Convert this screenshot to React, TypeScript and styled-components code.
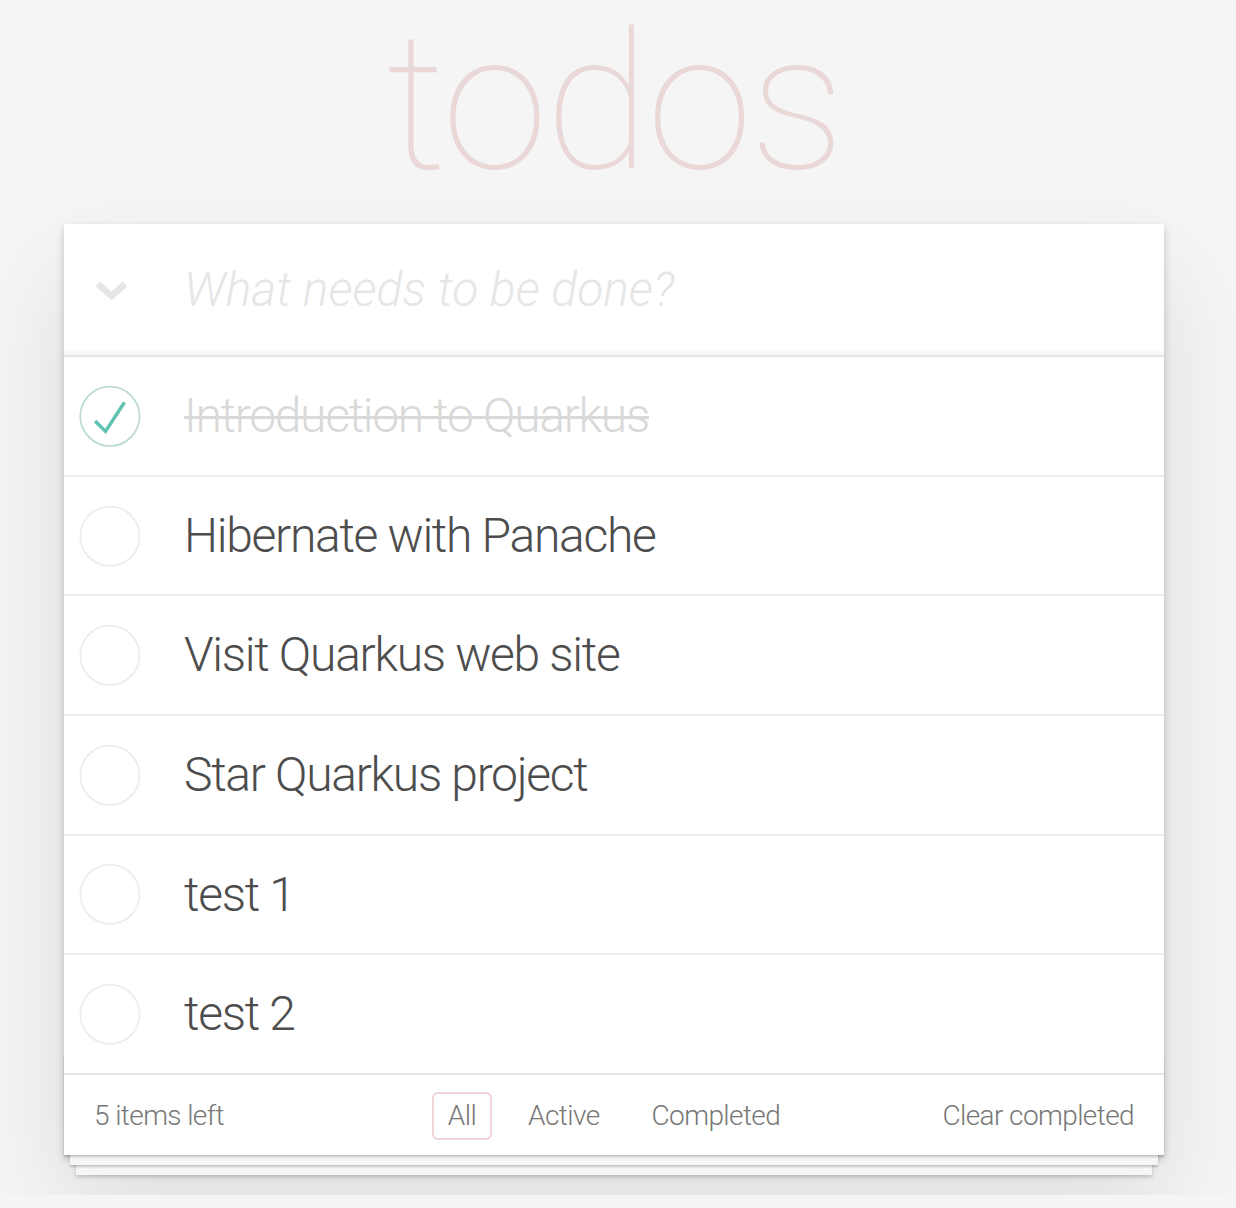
import React from "react";
import styled, { createGlobalStyle } from "styled-components";

const GlobalStyle = createGlobalStyle`
  html, body { margin: 0; padding: 0; }
  body {
    background: #f5f5f5;
    font-family: "Roboto", "Liberation Sans", Arial, sans-serif;
    font-weight: 300;
    color: #4d4d4d;
    -webkit-font-smoothing: antialiased;
  }
`;

const Page = styled.div`
  width: 1100px;
  margin: 0 0 40px 64px;
`;

const Title = styled.h1`
  margin: 0 0 18px;
  font-size: 192px;
  line-height: 206px;
  font-weight: 100;
  letter-spacing: -3px;
  text-align: center;
  color: rgba(175, 47, 47, 0.15);
  text-rendering: optimizeLegibility;
`;

const TodoApp = styled.section`
  position: relative;
  background: #fff;
  box-shadow: 0 4px 8px 0 rgba(0, 0, 0, 0.2), 0 50px 100px 0 rgba(0, 0, 0, 0.1);
`;

const Header = styled.header`
  display: flex;
  align-items: center;
  box-shadow: inset 0 -4px 2px rgba(0, 0, 0, 0.03);
`;

const ToggleAll = styled.label`
  display: flex;
  align-items: center;
  width: 120px;
  flex: none;
  padding: 2px 0 0 31px;
  box-sizing: border-box;
`;

const NewTodo = styled.input`
  flex: 1;
  min-width: 0;
  border: none;
  outline: none;
  background: transparent;
  padding: 32px 32px 32px 0;
  font-family: inherit;
  font-size: 48px;
  font-weight: 300;
  line-height: 1.4;
  letter-spacing: -1.2px;
  color: #4d4d4d;
  &::placeholder {
    font-style: italic;
    font-weight: 300;
    letter-spacing: 0;
    color: #e6e6e6;
  }
`;

const List = styled.ul`
  margin: 0;
  padding: 0;
  list-style: none;
  border-top: 2px solid #e6e6e6;
`;

const Item = styled.li`
  display: flex;
  align-items: center;
  border-bottom: 2px solid #ededed;
  &:last-child { border-bottom: none; }
`;

const Check = styled.svg`
  flex: none;
  width: 80px;
  height: 80px;
`;

const Label = styled.label<{ $done: boolean }>`
  flex: 1;
  margin-left: 40px;
  padding: 30px 30px 30px 0;
  font-size: 48px;
  line-height: 1.2;
  letter-spacing: -1.3px;
  white-space: pre;
  color: ${(p) => (p.$done ? "#d9d9d9" : "#4d4d4d")};
  text-decoration: ${(p) => (p.$done ? "line-through" : "none")};
  text-decoration-thickness: 3px;
`;

const Footer = styled.footer`
  position: relative;
  display: grid;
  grid-template-columns: 1fr auto 1fr;
  align-items: center;
  height: 40px;
  padding: 17px 30px 23px;
  border-top: 2px solid #e6e6e6;
  font-size: 28px;
  letter-spacing: -0.6px;
  color: #777;
  &::before {
    content: "";
    position: absolute;
    left: 0;
    right: 0;
    bottom: 0;
    height: 100px;
    overflow: hidden;
    pointer-events: none;
    box-shadow: 0 2px 2px rgba(0, 0, 0, 0.2), 0 16px 0 -6px #f6f6f6,
      0 18px 2px -6px rgba(0, 0, 0, 0.2), 0 32px 0 -12px #f6f6f6,
      0 34px 4px -12px rgba(0, 0, 0, 0.2);
  }
`;

const Count = styled.span`
  justify-self: start;
  line-height: 40px;
`;

const Filters = styled.ul`
  display: flex;
  gap: 8px;
  margin: 0;
  padding: 0;
  list-style: none;
`;

const Filter = styled.a<{ $selected?: boolean }>`
  display: block;
  margin: 0 6px;
  padding: 6px 14px;
  line-height: 32px;
  border: 2px solid ${(p) => (p.$selected ? "rgba(175, 47, 47, 0.2)" : "transparent")};
  border-radius: 6px;
  color: inherit;
  text-decoration: none;
  cursor: pointer;
`;

const Clear = styled.button`
  justify-self: end;
  margin: 0;
  padding: 0;
  border: none;
  background: none;
  font: inherit;
  letter-spacing: inherit;
  line-height: 40px;
  color: inherit;
  cursor: pointer;
`;

const Chevron = () => (
  <svg width="33" height="22" viewBox="0 0 33 22">
    <polyline points="3,4 16.5,16 30,4" fill="none" stroke="#e6e6e6" strokeWidth="6.5" />
  </svg>
);

const Toggle = ({ done }: { done: boolean }) => (
  <Check viewBox="-10 -18 100 135">
    <circle cx="50" cy="50" r="50" fill="none" stroke={done ? "#bddad5" : "#ededed"} strokeWidth="3" />
    {done && <path fill="#5dc2af" d="M72 25L42 71 27 56l-4 4 20 20 34-52z" />}
  </Check>
);

const todos = [
  { title: "Introduction to Quarkus", done: true },
  { title: "Hibernate with Panache", done: false },
  { title: "Visit Quarkus web site", done: false },
  { title: "Star Quarkus project", done: false },
  { title: "test 1", done: false },
  { title: "test 2", done: false },
];

export default function App() {
  return (
    <>
      <GlobalStyle />
      <Page>
        <Title>todos</Title>
        <TodoApp>
          <Header>
            <ToggleAll>
              <Chevron />
            </ToggleAll>
            <NewTodo placeholder="What needs to be done?" />
          </Header>
          <List>
            {todos.map((t) => (
              <Item key={t.title}>
                <Toggle done={t.done} />
                <Label $done={t.done}>{t.title}</Label>
              </Item>
            ))}
          </List>
          <Footer>
            <Count>5 items left</Count>
            <Filters>
              <li><Filter $selected>All</Filter></li>
              <li><Filter>Active</Filter></li>
              <li><Filter>Completed</Filter></li>
            </Filters>
            <Clear>Clear completed</Clear>
          </Footer>
        </TodoApp>
      </Page>
    </>
  );
}
